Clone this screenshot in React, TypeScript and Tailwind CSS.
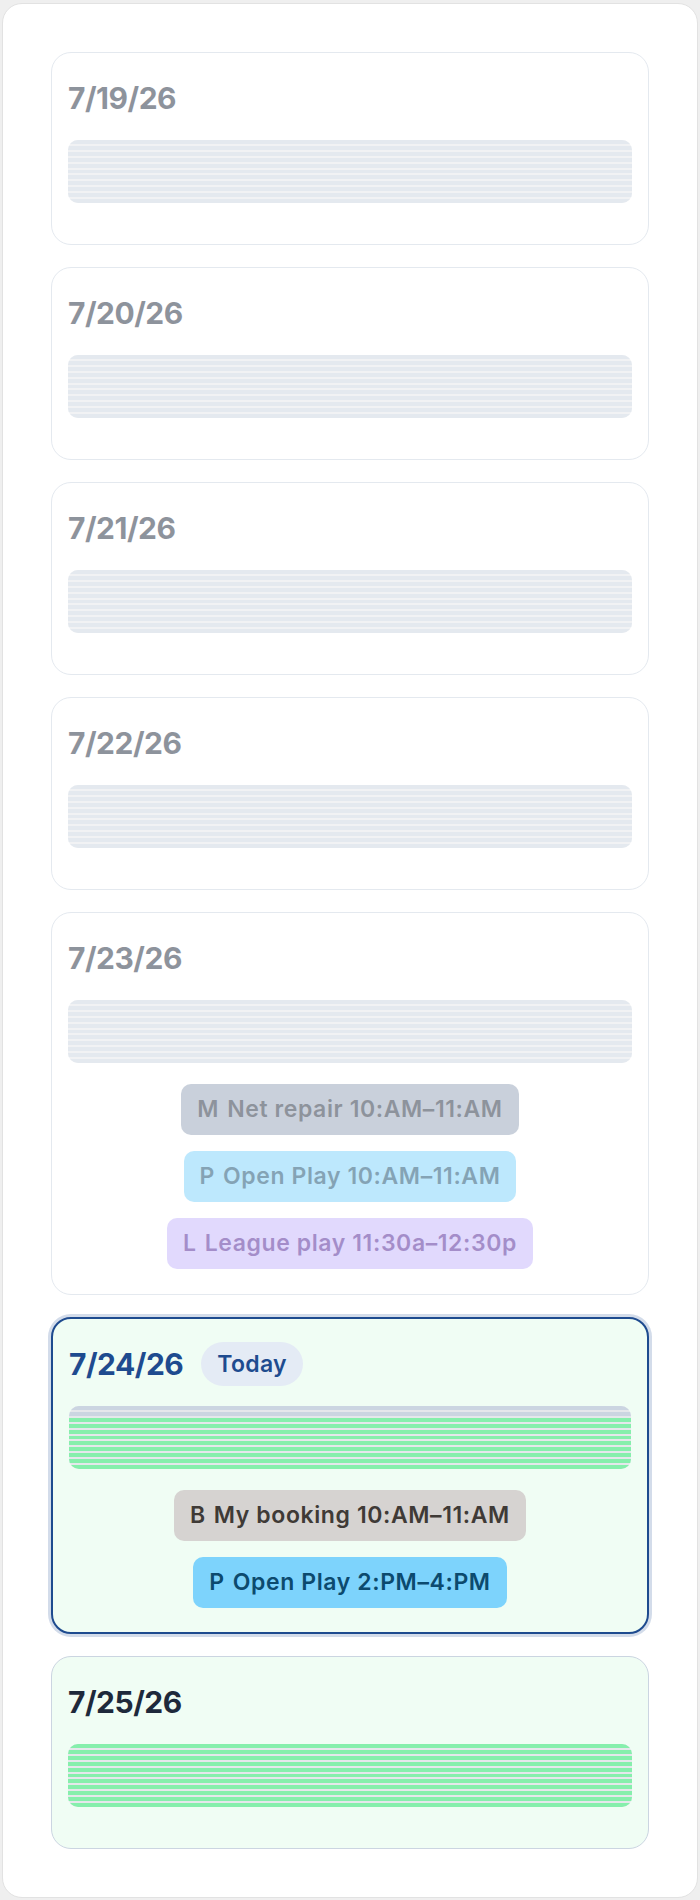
import React from 'react';

type EventKind = 'M' | 'P' | 'L' | 'B';

type DayEvent = {
  kind: EventKind;
  label: string;
  time: string;
};

type Day = {
  date: string;
  status: 'past' | 'today' | 'future';
  closedSlots: number;
  events: DayEvent[];
};

const SLOT_COUNT = 11;

const eventStyles: Record<EventKind, string> = {
  M: 'bg-[#94a3b8] text-[#1e293b]',
  P: 'bg-[#7dd3fc] text-[#0c4a6e]',
  L: 'bg-[#c4b5fd] text-[#4c1d95]',
  B: 'bg-[#d6d3d1] text-[#3f3a36]',
};

const days: Day[] = [
  { date: '7/19/26', status: 'past', closedSlots: SLOT_COUNT, events: [] },
  { date: '7/20/26', status: 'past', closedSlots: SLOT_COUNT, events: [] },
  { date: '7/21/26', status: 'past', closedSlots: SLOT_COUNT, events: [] },
  { date: '7/22/26', status: 'past', closedSlots: SLOT_COUNT, events: [] },
  {
    date: '7/23/26',
    status: 'past',
    closedSlots: SLOT_COUNT,
    events: [
      { kind: 'M', label: 'Net repair', time: '10:AM–11:AM' },
      { kind: 'P', label: 'Open Play', time: '10:AM–11:AM' },
      { kind: 'L', label: 'League play', time: '11:30a–12:30p' },
    ],
  },
  {
    date: '7/24/26',
    status: 'today',
    closedSlots: 2,
    events: [
      { kind: 'B', label: 'My booking', time: '10:AM–11:AM' },
      { kind: 'P', label: 'Open Play', time: '2:PM–4:PM' },
    ],
  },
  { date: '7/25/26', status: 'future', closedSlots: 0, events: [] },
];

function SlotBar({ closedSlots }: { closedSlots: number }) {
  return (
    <div className="mt-[17px] flex h-[63px] flex-col gap-[2px] overflow-hidden rounded-[10px] bg-[#e5e7eb]">
      {Array.from({ length: SLOT_COUNT }).map((_, i) => (
        <div key={i} className={i < closedSlots ? 'flex-1 bg-[#cbd5e1]' : 'flex-1 bg-[#86efac]'} />
      ))}
    </div>
  );
}

function EventPill({ event }: { event: DayEvent }) {
  return (
    <div
      className={`flex h-[51px] items-center gap-[8px] rounded-[10px] px-4 text-[23px] font-semibold tracking-[0.6px] ${eventStyles[event.kind]}`}
    >
      <span>{event.kind}</span>
      <span>
        {event.label} {event.time}
      </span>
    </div>
  );
}

function DayCard({ day }: { day: Day }) {
  const cardClass =
    day.status === 'today'
      ? 'border-2 border-[#1e4b8f] bg-[#f0fdf4] pb-[19px] shadow-[0_0_0_3px_#d3dcea]'
      : day.status === 'future'
        ? 'border border-[#cbd5e1] bg-[#f0fdf4] pb-5'
        : 'border border-[#cbd5e1] bg-white pb-5 opacity-50';

  return (
    <div className={`rounded-[20px] px-4 pt-5 ${cardClass}`}>
      <div className="flex h-[50px] items-center">
        <span
          className={`text-[30px] leading-none font-bold tracking-[-0.5px] ${
            day.status === 'today' ? 'text-[#1e4b8f]' : 'text-[#1e293b]'
          }`}
        >
          {day.date}
        </span>
        {day.status === 'today' && (
          <span className="ml-[18px] flex h-[44px] items-center rounded-full bg-[#e4ebf5] px-4 text-[23px] font-semibold tracking-[0.3px] text-[#1e4b8f]">
            Today
          </span>
        )}
      </div>
      <SlotBar closedSlots={day.closedSlots} />
      <div className="mt-[21px] flex flex-col items-center gap-4 pb-[5px] empty:pb-0">
        {day.events.map((event, i) => (
          <EventPill key={i} event={event} />
        ))}
      </div>
    </div>
  );
}

export default function App() {
  return (
    <div className="min-h-screen bg-[#efefef] px-[2px] pt-[3px] pb-[3px] font-['Inter','Noto_Sans',sans-serif]">
      <div className="rounded-[20px] border border-[#e2e2e2] bg-white p-12">
        <div className="flex flex-col gap-[22px]">
          {days.map((day) => (
            <DayCard key={day.date} day={day} />
          ))}
        </div>
      </div>
    </div>
  );
}
